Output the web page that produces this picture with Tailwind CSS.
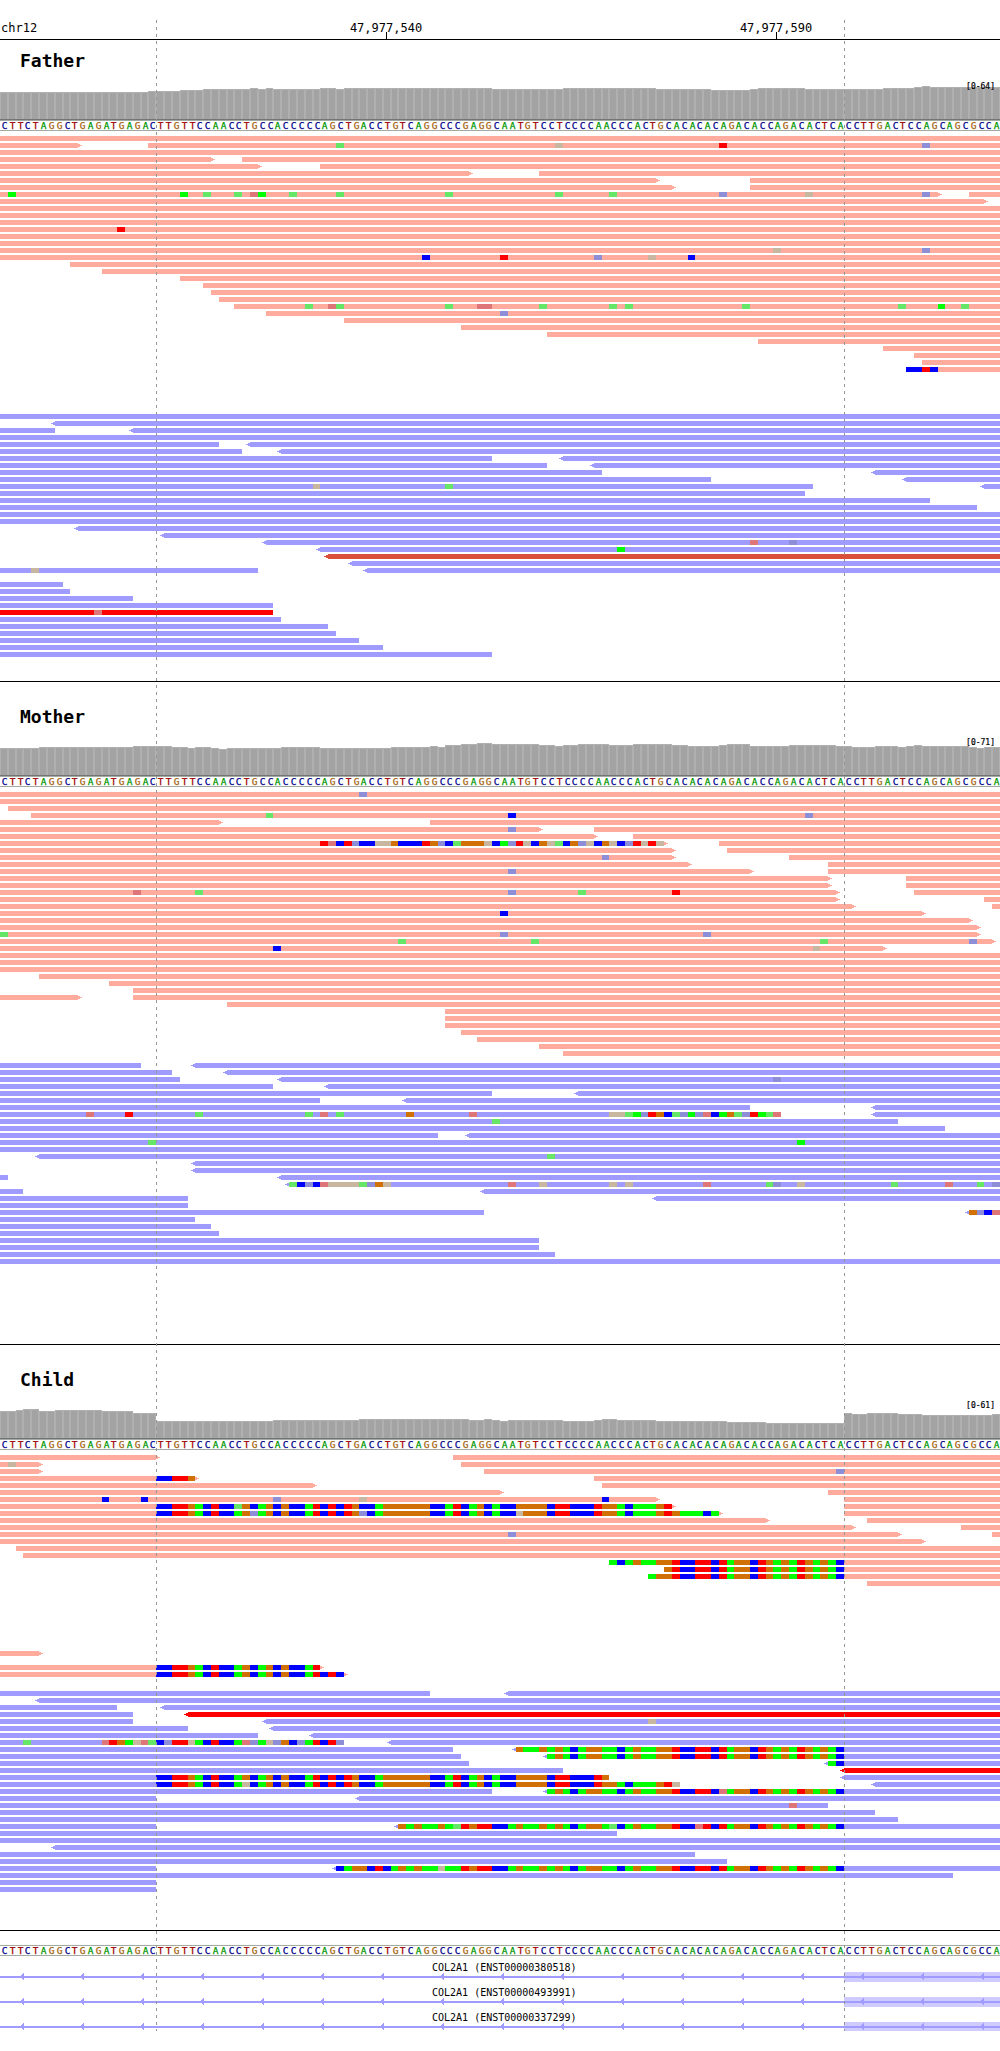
<!DOCTYPE html>
<html lang="en">
<head>
<meta charset="utf-8">
<title>chr12 trio alignment</title>
<script src="https://cdn.jsdelivr.net/npm/@tailwindcss/browser@4"></script>
</head>
<body class="bg-white">
<main class="relative flex h-[2051px] w-[1000px] flex-col overflow-hidden bg-white font-['DejaVu_Sans_Mono',monospace] text-black">
  <header>
    <svg class="block" width="1000" height="40" shape-rendering="crispEdges">
      <text x="1" y="32" class="text-[12px]">chr12</text>
      <text x="386" y="32" text-anchor="middle" class="text-[12px]">47,977,540</text>
      <text x="776" y="32" text-anchor="middle" class="text-[12px]">47,977,590</text>
      <path d="M386 32h1v7h-1zM776 32h1v7h-1zM0 39h1000v1H0z"/>
    </svg>
  </header>

  <section class="flex flex-col">
    <h2 class="h-10 pl-5 text-[18px] leading-[42px] font-bold">Father</h2>
    <div class="relative h-10">
      <svg class="block" width="1000" height="40" shape-rendering="crispEdges" data-coverage="father"></svg>
      <span class="absolute top-0 right-[5px] text-[8px] leading-[13px] [-webkit-text-stroke:0.2px_black]">[0-64]</span>
    </div>
    <svg class="block" width="1000" height="11" data-sequence></svg>
    <svg class="block" width="1000" height="550" shape-rendering="crispEdges" data-reads="father"></svg>
  </section>

  <section class="flex flex-col border-t border-black pt-[14px]">
    <h2 class="h-10 pl-5 text-[18px] leading-[42px] font-bold">Mother</h2>
    <div class="relative h-10">
      <svg class="block" width="1000" height="40" shape-rendering="crispEdges" data-coverage="mother"></svg>
      <span class="absolute top-0 right-[5px] text-[8px] leading-[13px] [-webkit-text-stroke:0.2px_black]">[0-71]</span>
    </div>
    <svg class="block" width="1000" height="11" data-sequence></svg>
    <svg class="block" width="1000" height="557" shape-rendering="crispEdges" data-reads="mother"></svg>
  </section>

  <section class="flex flex-col border-t border-black pt-[14px]">
    <h2 class="h-10 pl-5 text-[18px] leading-[42px] font-bold">Child</h2>
    <div class="relative h-10">
      <svg class="block" width="1000" height="40" shape-rendering="crispEdges" data-coverage="child"></svg>
      <span class="absolute top-0 right-[5px] text-[8px] leading-[13px] [-webkit-text-stroke:0.2px_black]">[0-61]</span>
    </div>
    <svg class="block" width="1000" height="11" data-sequence></svg>
    <svg class="block" width="1000" height="480" shape-rendering="crispEdges" data-reads="child"></svg>
  </section>

  <section class="flex flex-col border-t border-black pt-[14px]">
    <svg class="block" width="1000" height="11" data-sequence></svg>
    <svg class="block" width="1000" height="75" shape-rendering="crispEdges" id="genes"></svg>
  </section>

  <svg class="pointer-events-none absolute top-0 left-0" width="1000" height="2031" shape-rendering="crispEdges">
    <path d="M156.5 20V2031M844.5 20V2031" stroke="#969696" stroke-dasharray="3 4" fill="none"/>
  </svg>
</main>

<script>
const BASE = 7.8125;
const px = b => Math.round(b * BASE);
const FWD = '#ffab9d', REV = '#a09cff';
const STRONG = {A: '#00ff00', C: '#0000ff', G: '#d17105', T: '#ff0000'};
const WEAK = {A: '#66e666', C: '#8e8dd8', G: '#c9b6a1', T: '#dd7579'};
const INK = {A: '#009600', C: '#00008b', G: '#a5640f', T: '#a00000'};

const REFERENCE = 'CTTCTAGGCTGAGATGAGACTTGTTCCAACCTGCCACCCCCAGCTGACCTGTCAGGCCCGAGGC' +
  'AATGTCCTCCCCAACCCACTGCACACACAGACACCAGACACTCACCTTGACTCCAGCAGCGCCA';

// Bases of soft-clipped ends on each side of the deletion, with the base index where they start.
const CLIPS = {
  H: [20, 'CCTTGACTCCAGCAGCGCCATCTCTGCCAGGGGGGCCATCAGCACCGGGGCTTCCCTGGACAAAGTGAAACA'],
  L: [43, 'CAGGCTCAGAGAAGAATGTTCCAGAAGAGACAGGAACAGAAGGTCCTTCTAGGCTGAGATGAGAC']
};

// Runs of "base:height" per track.
const COVERAGE = {
  father: '0:27 19:28 23:29 26:30 32:31 33:30 34:31 35:30 41:31 43:30 44:31 63:30 72:31 84:30 91:29 96:30 97:31 103:30 113:31 117:32 118:33 119:32',
  mother: '0:27 5:28 17:29 22:28 24:27 25:28 27:27 28:26 29:27 36:28 41:27 50:28 55:29 56:28 57:30 59:31 61:32 63:31 69:30 71:29 72:30 74:31 78:30 81:31 86:30 88:29 92:30 93:31 96:29 101:30 107:29 109:28 112:29 115:28 116:29 117:30 118:29 124:28 125:27 126:28',
  child: '0:27 2:28 3:29 5:27 7:28 13:27 17:25 20:17 35:18 46:19 60:18 62:19 63:18 64:17 65:18 72:17 76:18 77:19 79:18 84:17 93:16 98:15 108:25 109:24 111:25 115:24 118:23 127:24'
};

// One line per row: reads "start-end" with < or > for the tip, then mismatches "base:letters" (lower case = low quality).
const READS = {
  father: [5, `0-128
0-10> 19-128 43:a 71:g 92:T 118:c
0-128
0-27> 31-128
0-33> 41-128
0-60> 69-128
0-84> 96-128
0-86> 96-128
0-120> 124-128 1:A 23:A 26:a 30:a 32:tA 37:a 43:a 57:a 71:a 78:a 92:c 103:g 118:c
0-126>
0-128
0-128
0-128
0-128 15:T
0-128
0-128
0-128 99:g 118:c
0-128 54:C 64:T 76:c 83:g 88:C
9-128
13-128
23-128
26-128
27-128
28-128
30-128 39:a 42:ta 57:a 61:tt 69:a 78:a 80:a 95:a 115:a 120:A 123:a
34-128 64:c
44-128
59-128
70-128
97-128
113-128
117-128
118-128
116-128 116:CCTC`, 283, `0-128
<7-128
0-7 <17-128
0-128
0-28 <32-128
0-31 <36-128
0-63 <72-128
0-70 <76-128
0-77 <112-128
0-91 <116-128
0-104 <126-128 40:g 57:a
0-103
0-119
0-125
0-128
0-128
<10-128
<21-128
<34-128 96:t 101:c
<41-128 79:A
<42-128O
<45-128
0-33 <47-128 4:g

0-8
0-9
0-17
0-35
0-35R 12:t
0-36
0-42
0-43
0-46
0-49
0-63`],
  mother: [5, `0-128 46:c
0-128
1-128
4-128 34:a 65:C 103:c
0-28> 55-128
0-69> 76-128 65:c
0-76> 81-128
0-85> 92-128 41:TtCTcCCggGCCCTGcCaGGGgCAcTgCGgaCGcgCGgCcTgTg
0-86> 93-128
0-86> 101-128 77:c
0-88> 106-128
0-96> 106-128 65:c
0-106> 116-128
0-106> 116-128
0-107> 117-128 17:t 25:a 65:c 74:a 86:T
0-107> 126-128
0-109> 127-128
0-118> 64:C
0-124>
0-125>
0-125> 0:a 64:c 90:c
0-127> 51:a 68:a 105:a 124:c
0-113> 35:C 104:g
0-128
0-128
0-128
5-128
14-128
17-128
0-10> 17-128
29-128
57-128
57-128
57-128
59-128
61-128
69-128
72-128`, 276, `0-18 <25-128
0-22 <29-128
0-23 <36-128 99:c
0-35 <42-128
0-63 <74-128
0-41 <52-128
0-96 <112-128
0-100 <112-128 11:t 16:T 25:a 39:a 41:t 43:a 52:G 60:t 78:ggaAcTGCacActCAGacTAat
0-115 63:a
0-121
0-56 <60-128
0-128 19:a 102:A
0-128
<5-128 70:a
<25-128
<25-128
0-1 <36-128
<37-128 37:aCcCtggggacGg 65:t 69:g 78:g 80:g 90:t 98:ac 102:g 114:a 121:t 125:a 127:c
0-3 <62-128
0-24 <84-128
0-24
0-62 <124-128 124:GcCt
0-25
0-27
0-28
0-69
0-69
0-71
0-128`],
  child: [5, `0-20> 58-128
0-5> 59-128 1:g
0-5> 62-128 107:c
0-25> 76-128 H20-25
0-40> 77-128
0-64> 106-128
0-84> 108-128 13:C 18:C 35:c 46:g 77:C
0-86> 108-128 H20-86 30:a
0-92> 108-128 H20-92 32:c 46:c 66:g
0-98> 111-128
0-109> 123-128
0-115> 127-128 65:c
0-118>
2-128
3-128
78-128 L78-108
85-128 L85-108
83-128 L83-108
111-128









0-5>

0-41> H20-41
0-44> H20-44`, 241, `0-55 <65-128
<5-128
0-15 <21-128
0-17 <24-128R
0-17 <34-128 83:g
0-24 <35-128
0-33 <40-128
0-44 <50-128 3:a 13:tTGAgtaCcTTgACTCCAtcAgcGCcATCTc
0-58 <66-128 L66-108
0-59 <70-128 L70-108
0-60 <106-128 L106-108
0-72 <108-128R
0-78 <108-128 H20-78
0-87 <112-128 H20-86 31:g 86:g
0-63 <70-128 L70-108 92:t
0-20 <46-128
0-106 101:t
0-112
0-115
0-20 <51-128 L51-108 58:a 78:a 89:t
0-79
0-128
<7-128
0-89
0-93
0-20 <43-128 L43-108 56:g
0-122
0-20
0-20`]
};

const rect = (x, y, w, h, fill) => `<rect x="${x}" y="${y}" width="${w}" height="${h}" fill="${fill}"/>`;

function letters(start, text, y) {
  return [...text].map((ch, i) => {
    const a = px(start + i), b = px(start + i + 1), up = ch.toUpperCase();
    return rect(a, y, b - a, 5, ch === up ? STRONG[up] : WEAK[up]);
  }).join('');
}

function row(line, y, color) {
  return line.split(' ').filter(Boolean).map(tok => {
    let m;
    if ((m = tok.match(/^([HL])(\d+)-(\d+)$/))) {
      const [origin, seq] = CLIPS[m[1]];
      return letters(+m[2], seq.slice(m[2] - origin, m[3] - origin), y);
    }
    if ((m = tok.match(/^(\d+):(\w+)$/))) return letters(+m[1], m[2], y);
    m = tok.match(/^(<?)(\d+)-(\d+)(>?)([RO]?)$/);
    const a = px(m[2]), b = px(m[3]);
    const fill = m[5] === 'R' ? '#ff0000' : m[5] === 'O' ? '#d94f3a' : color;
    let s = rect(a, y, b - a, 5, fill);
    if (m[1]) s += rect(a - 2, y + 1, 2, 3, fill) + rect(a - 4, y + 2, 2, 1, fill);
    if (m[4]) s += rect(b, y + 1, 2, 3, fill) + rect(b + 2, y + 2, 2, 1, fill);
    return s;
  }).join('');
}

document.querySelectorAll('[data-reads]').forEach(svg => {
  const [fy, fwd, ry, rev] = READS[svg.dataset.reads];
  svg.innerHTML = fwd.split('\n').map((l, i) => row(l, fy + 7 * i, FWD)).join('') +
    rev.split('\n').map((l, i) => row(l, ry + 7 * i, REV)).join('');
});

document.querySelectorAll('[data-coverage]').forEach(svg => {
  const runs = COVERAGE[svg.dataset.coverage].split(' ').map(r => r.split(':').map(Number));
  let s = '', k = 0;
  for (let i = 0; i < 128; i++) {
    if (runs[k + 1] && runs[k + 1][0] <= i) k++;
    const h = runs[k][1], a = px(i), b = px(i + 1);
    s += rect(a, 39 - h, b - a, h, '#b0b0b0') + rect(a + 1, 40 - h, b - a - 2, h - 1, '#a3a3a3');
  }
  svg.innerHTML = s + rect(0, 39, 1000, 1, '#737373');
});

document.querySelectorAll('[data-sequence]').forEach(svg => {
  svg.innerHTML = rect(0, 0, 1000, 1, '#a3aaa3') + rect(0, 10, 1000, 1, '#a3aaa3') +
    [...REFERENCE].map((c, i) => `<text x="${px(i) + 1.75}" y="9" fill="${INK[c]}" stroke="${INK[c]}" stroke-width="0.25" class="text-[9.5px]">${c}</text>`).join('');
});

document.getElementById('genes').innerHTML = ['ENST00000380518', 'ENST00000493991', 'ENST00000337299'].map((id, n) => {
  const y = 16 + 25 * n;
  let s = `<text x="432" y="${y - 1}" class="text-[10px]">COL2A1 (${id})</text>` +
    rect(844, y, 156, 10, '#d0cbff') + rect(0, y + 4, 1000, 2, REV);
  for (let x = 21; x < 1000; x += 60)
    s += rect(x + 2, y + 1, 1, 7, REV) + rect(x + 1, y + 2, 1, 5, REV) + rect(x, y + 3, 1, 3, REV);
  return s;
}).join('');
</script>
</body>
</html>
